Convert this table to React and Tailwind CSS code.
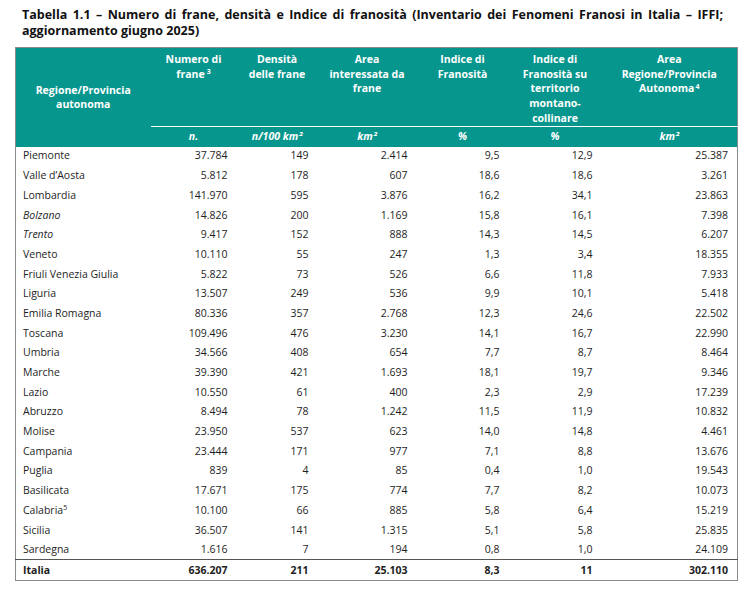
const rows = [
  ["Piemonte", "37.784", "149", "2.414", "9,5", "12,9", "25.387"],
  ["Valle d’Aosta", "5.812", "178", "607", "18,6", "18,6", "3.261"],
  ["Lombardia", "141.970", "595", "3.876", "16,2", "34,1", "23.863"],
  ["Bolzano", "14.826", "200", "1.169", "15,8", "16,1", "7.398", true],
  ["Trento", "9.417", "152", "888", "14,3", "14,5", "6.207", true],
  ["Veneto", "10.110", "55", "247", "1,3", "3,4", "18.355"],
  ["Friuli Venezia Giulia", "5.822", "73", "526", "6,6", "11,8", "7.933"],
  ["Liguria", "13.507", "249", "536", "9,9", "10,1", "5.418"],
  ["Emilia Romagna", "80.336", "357", "2.768", "12,3", "24,6", "22.502"],
  ["Toscana", "109.496", "476", "3.230", "14,1", "16,7", "22.990"],
  ["Umbria", "34.566", "408", "654", "7,7", "8,7", "8.464"],
  ["Marche", "39.390", "421", "1.693", "18,1", "19,7", "9.346"],
  ["Lazio", "10.550", "61", "400", "2,3", "2,9", "17.239"],
  ["Abruzzo", "8.494", "78", "1.242", "11,5", "11,9", "10.832"],
  ["Molise", "23.950", "537", "623", "14,0", "14,8", "4.461"],
  ["Campania", "23.444", "171", "977", "7,1", "8,8", "13.676"],
  ["Puglia", "839", "4", "85", "0,4", "1,0", "19.543"],
  ["Basilicata", "17.671", "175", "774", "7,7", "8,2", "10.073"],
  ["Calabria", "10.100", "66", "885", "5,8", "6,4", "15.219"],
  ["Sicilia", "36.507", "141", "1.315", "5,1", "5,8", "25.835"],
  ["Sardegna", "1.616", "7", "194", "0,8", "1,0", "24.109"],
];

const units = ["n.", "n/100 km²", "km²", "%", "%", "km²"];

export default function App() {
  return (
    <div className="w-[750px] h-[589px] bg-white text-[#1e1e1e] font-['Open_Sans',sans-serif] overflow-hidden">
      {/* Title */}
      <div className="pl-[22px] pt-[7px] w-[723px] text-[12.5px] leading-[16px] font-bold text-[#111]">
        <div className="whitespace-nowrap text-justify [text-align-last:justify]">
          Tabella 1.1 – Numero di frane, densità e Indice di franosità (Inventario dei Fenomeni Franosi in Italia – IFFI;
        </div>
        <div>aggiornamento giugno 2025)</div>
      </div>

      {/* Table */}
      <table className="ml-[15px] mt-[8px] w-[722px] table-fixed border-collapse border border-[#8a8a8a] text-[10.5px]">
        <colgroup>
          <col className="w-[135px]" />
          <col className="w-[86px]" />
          <col className="w-[81px]" />
          <col className="w-[99px]" />
          <col className="w-[92px]" />
          <col className="w-[93px]" />
          <col className="w-[136px]" />
        </colgroup>
        <thead className="bg-[#07968d] text-white font-bold leading-[14.7px]">
          <tr className="h-[79px] align-top">
            <th rowSpan={2} className="align-middle text-center font-bold px-1">
              Regione/Provincia
              <br />
              autonoma
            </th>
            <th className="pt-[4px] px-1 font-bold">
              Numero di
              <br />
              frane<sup className="text-[7px] ml-[2px]">3</sup>
            </th>
            <th className="pt-[4px] px-1 font-bold">
              Densità
              <br />
              delle frane
            </th>
            <th className="pt-[4px] px-1 font-bold">
              Area
              <br />
              interessata da
              <br />
              frane
            </th>
            <th className="pt-[4px] px-1 font-bold">
              Indice di
              <br />
              Franosità
            </th>
            <th className="pt-[4px] px-1 font-bold">
              Indice di
              <br />
              Franosità su
              <br />
              territorio
              <br />
              montano-
              <br />
              collinare
            </th>
            <th className="pt-[4px] px-1 font-bold">
              Area
              <br />
              Regione/Provincia
              <br />
              Autonoma<sup className="text-[7px] ml-[1px]">4</sup>
            </th>
          </tr>
          <tr className="h-[20px]">
            {units.map((u, i) => (
              <th key={i} className="border-t border-white italic font-bold text-center">
                {u}
              </th>
            ))}
          </tr>
        </thead>
        <tbody>
          {rows.map((r) => (
            <tr key={r[0]} className="h-[19.7px]">
              <td className={"pl-[7px] whitespace-nowrap " + (r[7] ? "italic" : "")}>
                {r[0]}
                {r[0] === "Calabria" && <sup className="text-[7px]">5</sup>}
              </td>
              {r.slice(1, 7).map((v, i) => (
                <td key={i} className="text-right pr-[9px]">
                  {v}
                </td>
              ))}
            </tr>
          ))}
          <tr className="h-[21px] font-bold border-t border-[#555]">
            <td className="pl-[7px]">Italia</td>
            <td className="text-right pr-[9px]">636.207</td>
            <td className="text-right pr-[9px]">211</td>
            <td className="text-right pr-[9px]">25.103</td>
            <td className="text-right pr-[9px]">8,3</td>
            <td className="text-right pr-[9px]">11</td>
            <td className="text-right pr-[9px]">302.110</td>
          </tr>
        </tbody>
      </table>
    </div>
  );
}
